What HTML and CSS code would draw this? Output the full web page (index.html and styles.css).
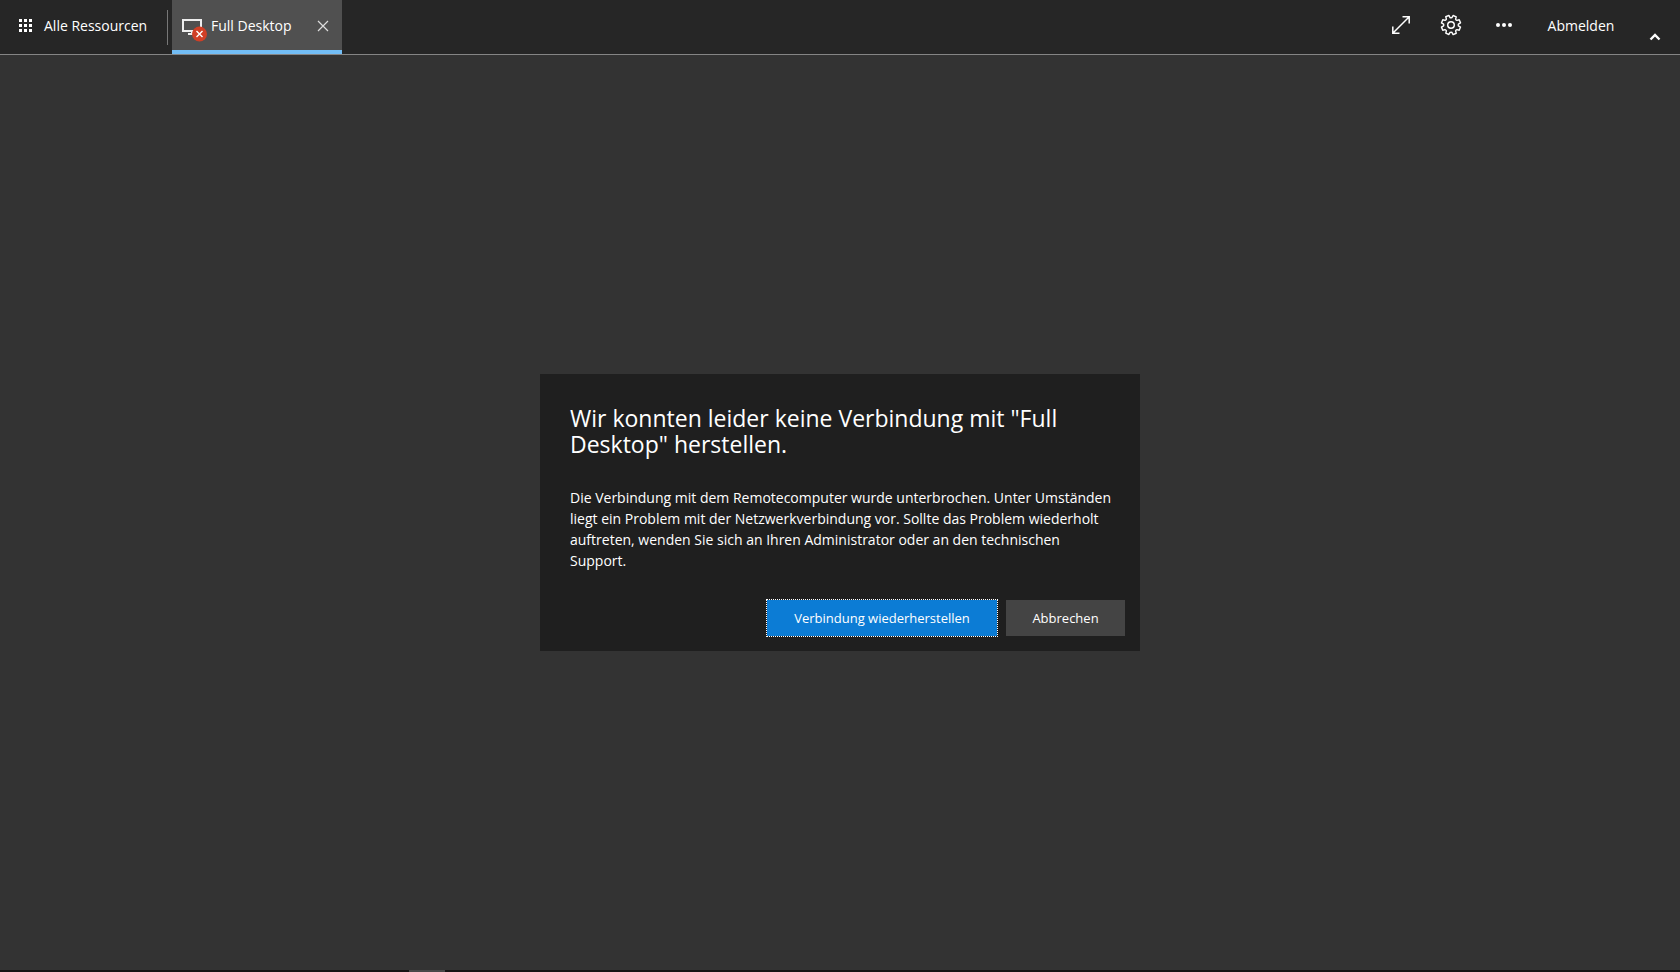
FILE: index.html
```html
<!DOCTYPE html>
<html lang="de">
<head>
<meta charset="utf-8">
<title>Full Desktop</title>
<link rel="stylesheet" href="styles.css">
</head>
<body>
<header class="topbar">
  <nav class="topbar-left" aria-label="Ressourcen">
    <button class="bar-button all-resources" type="button">
      <svg width="13" height="13" viewBox="0 0 13 13" fill="currentColor" aria-hidden="true">
        <path d="M0 0h3v3H0zM5 0h3v3H5zM10 0h3v3h-3zM0 5h3v3H0zM5 5h3v3H5zM10 5h3v3h-3zM0 10h3v3H0zM5 10h3v3H5zM10 10h3v3h-3z"/>
      </svg>
      <span>Alle Ressourcen</span>
    </button>
    <span class="separator"></span>
    <div class="tab">
      <button class="bar-button tab-label" type="button">
        <svg width="26" height="24" viewBox="0 0 26 24" fill="none" aria-hidden="true">
          <path d="M1 2h18v11H1z" stroke="#eee" stroke-width="2"/>
          <path d="M10 13v3M6 16h8" stroke="#eee" stroke-width="2"/>
          <circle cx="17.500" cy="16" r="7.500" fill="#d03f26"/>
          <path d="M14.500 13l6 6M20.500 13l-6 6" stroke="#fff" stroke-width="1.400"/>
        </svg>
        <span>Full Desktop</span>
      </button>
      <button class="bar-button tab-close" type="button" aria-label="Schließen">
        <svg width="12" height="12" viewBox="0 0 12 12" fill="none" stroke="#ddd" stroke-width="1.200" aria-hidden="true">
          <path d="M1 1l10 10M11 1L1 11"/>
        </svg>
      </button>
    </div>
  </nav>
  <div class="topbar-right">
    <button class="bar-button icon-button" type="button" aria-label="Vollbild">
      <svg width="20" height="20" viewBox="0 0 20 20" fill="none" stroke="currentColor" stroke-width="1.500" aria-hidden="true">
        <path d="M2 18L18 2M11.500 1.800h6.700v6.700M1.800 11.500v6.700h6.700"/>
      </svg>
    </button>
    <button class="bar-button icon-button" type="button" aria-label="Einstellungen">
      <svg width="22" height="22" viewBox="-11 -11 22 22" fill="none" stroke="currentColor" stroke-width="1.400" stroke-linejoin="round" aria-hidden="true">
        <g transform="rotate(22.5)">
          <path d="M-1.700 -9.600H1.700L2 -7.200Q3 -6.300 3.700 -6.500L5.600 -8L8 -5.600L6.500 -3.700Q6.300 -3 7.200 -2L9.600 -1.700V1.700L7.200 2Q6.300 3 6.500 3.700L8 5.600L5.600 8L3.700 6.500Q3 6.300 2 7.200L1.700 9.600H-1.700L-2 7.200Q-3 6.300 -3.700 6.500L-5.600 8L-8 5.600L-6.500 3.700Q-6.300 3 -7.200 2L-9.600 1.700V-1.700L-7.200 -2Q-6.300 -3 -6.500 -3.700L-8 -5.600L-5.600 -8L-3.700 -6.500Q-3 -6.300 -2 -7.200Z"/>
        </g>
        <circle r="3.300"/>
      </svg>
    </button>
    <button class="bar-button icon-button more" type="button" aria-label="Mehr">
      <svg width="16" height="4" viewBox="0 0 16 4" fill="currentColor" aria-hidden="true">
        <circle cx="2" cy="2" r="2"/><circle cx="8" cy="2" r="2"/><circle cx="14" cy="2" r="2"/>
      </svg>
    </button>
    <button class="bar-button sign-out" type="button">Abmelden</button>
    <button class="bar-button collapse" type="button" aria-label="Leiste einklappen">
      <svg width="12" height="8" viewBox="0 0 12 8" fill="none" stroke="currentColor" stroke-width="2.400" aria-hidden="true">
        <path d="M1.500 6.500L6 2l4.500 4.500"/>
      </svg>
    </button>
  </div>
</header>
<main class="stage">
  <section class="dialog" role="dialog" aria-labelledby="dialog-title" aria-describedby="dialog-text">
    <h1 class="dialog-title" id="dialog-title">Wir konnten leider keine Verbindung mit "Full Desktop" herstellen.</h1>
    <p class="dialog-text" id="dialog-text">Die Verbindung mit dem Remotecomputer wurde unterbrochen. Unter Umständen liegt ein Problem mit der Netzwerkverbindung vor. Sollte das Problem wiederholt auftreten, wenden Sie sich an Ihren Administrator oder an den technischen Support.</p>
    <div class="dialog-actions">
      <button class="action primary" type="button">Verbindung wiederherstellen</button>
      <button class="action" type="button">Abbrechen</button>
    </div>
  </section>
</main>
<footer class="taskbar"><span class="taskbar-item"></span></footer>
</body>
</html>
```
FILE: styles.css
```css
* {
  box-sizing: border-box;
}

body {
  margin: 0;
  min-height: 100vh;
  display: flex;
  flex-direction: column;
  background: #333;
  color: #fff;
  font: 14px/21px "Open Sans", "Noto Sans", sans-serif;
}

button {
  margin: 0;
  padding: 0;
  border: 0;
  background: none;
  color: inherit;
  font: inherit;
  white-space: nowrap;
}

.topbar {
  display: flex;
  justify-content: space-between;
  height: 55px;
  background: #262626;
  border-bottom: 1px solid #858585;
}

.topbar-left,
.topbar-right {
  display: flex;
}

.bar-button {
  display: flex;
  align-items: center;
  height: 50px;
}

.all-resources {
  gap: 12px;
  width: 167px;
  padding-left: 19px;
}

.separator {
  width: 1px;
  height: 35px;
  margin: 10px 4px 0 0;
  background: #777;
}

.tab {
  display: flex;
  justify-content: space-between;
  width: 170px;
  padding: 0 13px 0 10px;
  background: #505050;
  border-bottom: 4px solid #72bdf5;
}

.tab-label {
  gap: 3px;
}

.tab-label svg {
  margin-top: 10px;
}

.tab-close {
  height: 52px;
}

.topbar-right {
  padding-right: 19px;
}

.icon-button {
  justify-content: center;
  width: 50px;
}

.more {
  width: 56px;
}

.sign-out {
  justify-content: center;
  width: 98px;
}

.collapse {
  align-items: flex-end;
  justify-content: flex-end;
  width: 31px;
  height: 41px;
}

.stage {
  flex: 1;
  display: grid;
  place-items: center;
}

.dialog {
  width: 600px;
  max-width: 100%;
  padding: 31px 15px 15px 30px;
  background: #1f1f1f;
}

.dialog-title {
  margin: 0 15px 30px 0;
  font-size: 23px;
  line-height: 26px;
  font-weight: 400;
}

.dialog-text {
  margin: 0 9px 29px 0;
}

.dialog-actions {
  display: flex;
  justify-content: flex-end;
  gap: 9px;
}

.action {
  min-width: 119px;
  height: 36px;
  padding: 1px 25px 0;
  background: #444;
  font-size: 13px;
}

.primary {
  min-width: 230px;
  background: #0c7cd5;
  outline: 1px dotted #fff;
}

.taskbar {
  height: 2px;
  padding-left: 409px;
  background: #161414;
}

.taskbar-item {
  display: block;
  width: 36px;
  height: 2px;
  background: #484848;
}
```
